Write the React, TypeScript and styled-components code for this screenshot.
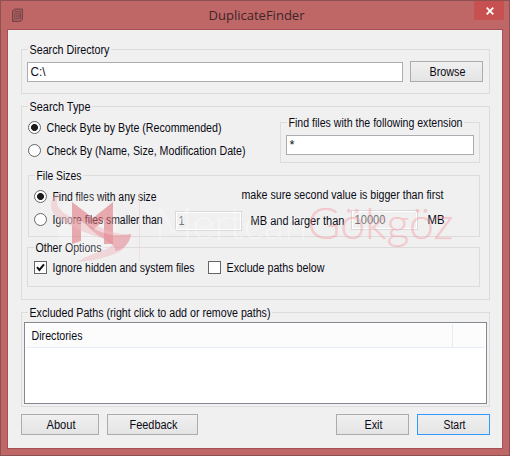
import React, { useLayoutEffect, useRef } from 'react';
import styled, { createGlobalStyle } from 'styled-components';

const GlobalStyle = createGlobalStyle`
  *, *::before, *::after { box-sizing: border-box; }
  body { margin: 0; background: #bf6767; }
`;

/* ---------- text ---------- */

const TextBox = styled.span<{ $w: number }>`
  display: block;
  flex: none;
  width: ${(p) => p.$w}px;
  white-space: nowrap;
`;

const TextInner = styled.span`
  display: inline-block;
  vertical-align: top;
  transform-origin: 0 50%;
`;

/* Condenses a label horizontally so that it fills the given width. */
function Text({ w, children, className }: { w: number; children: string; className?: string }) {
  const ref = useRef<HTMLSpanElement>(null);
  useLayoutEffect(() => {
    const el = ref.current;
    if (el && el.offsetWidth) {
      el.style.transform = 'none';
      el.style.transform = `translate(0.5px, 1px) scaleX(${w / el.getBoundingClientRect().width})`;
    }
  }, [w, children]);
  return (
    <TextBox $w={w} className={className}>
      <TextInner ref={ref}>{children}</TextInner>
    </TextBox>
  );
}

const Note = styled(Text)<{ $ml?: number; $mt?: number }>`
  margin-left: ${(p) => p.$ml ?? 0}px;
  margin-top: ${(p) => p.$mt ?? 0}px;
`;

/* ---------- window ---------- */

const Window = styled.div`
  position: relative;
  width: 510px;
  height: 456px;
  padding: 0 6px 6px;
  background: #bf6767;
  border: 1px solid #8f5051;
  font: 12px/13px 'Liberation Sans', Arial, sans-serif;
  color: #0a0a14;
`;

const TitleBar = styled.header`
  display: flex;
  align-items: flex-start;
  height: 28px;
`;

const AppIcon = styled.svg`
  margin: 7px 0 0 4px;
  width: 14px;
  height: 15px;
`;

const Title = styled(Text)`
  margin: 4px 0 0 183px;
  font: 13.5px/18px 'Open Sans', 'Noto Sans', sans-serif;
  color: #3d2528;
`;

const CloseButton = styled.button`
  display: flex;
  align-items: center;
  justify-content: center;
  width: 30px;
  height: 19px;
  margin: 0 -1px 0 auto;
  padding: 0 0 0 2px;
  border: 0;
  background: #c75050;
`;

const Client = styled.main`
  display: flex;
  flex-direction: column;
  height: 420px;
  padding: 13px 13px 0;
  background: #f0f0f0;
  border: 1px solid #a35155;
`;

/* ---------- controls ---------- */

const Group = styled.fieldset<{ $h: number; $w?: number; $m?: string }>`
  flex: none;
  min-width: 0;
  width: ${(p) => p.$w ?? 469}px;
  height: ${(p) => p.$h}px;
  margin: ${(p) => p.$m ?? '0'};
  padding: 0;
  border: 1px solid #dcdcdc;
`;

const Legend = styled.legend`
  display: block;
  height: 13px;
  margin-left: 6px;
  padding: 0 2px 0 1px;
`;

const Row = styled.div<{ $p?: string; $h?: number }>`
  display: flex;
  align-items: flex-start;
  padding: ${(p) => p.$p ?? '0'};
  height: ${(p) => (p.$h ? `${p.$h}px` : 'auto')};
`;

const RadioList = styled.div`
  display: flex;
  flex-direction: column;
  gap: 10px;
  padding: 8px 0 0 6px;
`;

const Field = styled.div<{ $w: number; $mt?: number; $ml?: number; $disabled?: boolean }>`
  flex: none;
  width: ${(p) => p.$w}px;
  height: 20px;
  margin: ${(p) => p.$mt ?? 0}px 0 0 ${(p) => p.$ml ?? 0}px;
  padding: 2px 0 0 2px;
  background: ${(p) => (p.$disabled ? '#f0f0f0' : '#fff')};
  border: 1px solid ${(p) => (p.$disabled ? '#d9d9d9' : '#abadb3')};
  box-shadow: ${(p) => (p.$disabled ? 'inset 0 0 0 1px #fff' : 'none')};
  color: ${(p) => (p.$disabled ? '#747474' : 'inherit')};
`;

const Button = styled.button<{ $w: number; $ml?: number; $primary?: boolean }>`
  display: flex;
  justify-content: center;
  flex: none;
  width: ${(p) => p.$w}px;
  height: 21px;
  margin: 0 0 0 ${(p) => p.$ml ?? 0}px;
  padding: 3px 0 0;
  font: inherit;
  color: inherit;
  text-align: left;
  background: linear-gradient(#f0f0f0, #e4e4e4);
  border: 1px solid ${(p) => (p.$primary ? '#3399ff' : '#acacac')};
`;

const Option = styled.label<{ $mt?: number; $ml?: number }>`
  display: flex;
  flex: none;
  gap: 5px;
  margin: ${(p) => p.$mt ?? 0}px 0 0 ${(p) => p.$ml ?? 0}px;
`;

const RadioMark = styled.span<{ $on?: boolean }>`
  flex: none;
  width: 13px;
  height: 13px;
  border: 1px solid #666;
  border-radius: 50%;
  background: ${(p) =>
    p.$on ? 'radial-gradient(circle, #1c1c1c 3.1px, #fff 3.8px)' : '#fff'};
`;

const CheckMark = styled.span`
  display: flex;
  flex: none;
  width: 13px;
  height: 13px;
  border: 1px solid #666;
  background: #fff;
`;

function Radio({ on, w, mt, label }: { on?: boolean; w: number; mt?: number; label: string }) {
  return (
    <Option $mt={mt}>
      <RadioMark $on={on} />
      <Text w={w}>{label}</Text>
    </Option>
  );
}

function Check({ on, w, ml, label }: { on?: boolean; w: number; ml?: number; label: string }) {
  return (
    <Option $ml={ml}>
      <CheckMark>
        {on && (
          <svg width="11" height="11" viewBox="0 0 11 11">
            <path d="M2 5.2 4.4 8 9 2.4" fill="none" stroke="#111" strokeWidth="2" />
          </svg>
        )}
      </CheckMark>
      <Text w={w}>{label}</Text>
    </Option>
  );
}

/* ---------- list ---------- */

const List = styled.div`
  width: 463px;
  height: 82px;
  margin: 3px 0 0 2px;
  padding: 1px;
  background: #fff;
  border: 1px solid #828790;
`;

const ListHeader = styled.div`
  display: flex;
  height: 24px;
  background: #fcfcfc;
  border-bottom: 1px solid #e8eef7;
`;

const Column = styled.div`
  width: 427px;
  padding: 5px 0 0 5px;
  border-right: 1px solid #e3ecf7;
`;

const Footer = styled.footer`
  display: flex;
  margin-top: 7px;
`;

/* ---------- watermark ---------- */

const Watermark = styled.div`
  position: absolute;
  left: 49px;
  top: 187px;
  display: flex;
  width: 410px;
  height: 78px;
  pointer-events: none;
`;

const Brand = styled.div`
  display: flex;
  margin: 8px 0 0 12px;
  font: 300 43px/52px Lato, 'Open Sans', sans-serif;
`;

const BrandFirst = styled(Text)`
  color: rgba(255, 255, 255, 0.36);
`;

const BrandLast = styled(Text)`
  color: rgba(246, 145, 155, 0.38);
  -webkit-text-stroke: 0.4px rgba(246, 145, 155, 0.3);
`;

export default function App() {
  return (
    <Window>
      <GlobalStyle />
      <TitleBar>
        <AppIcon viewBox="0 0 14 15">
          <path d="M3.5 1h8v10.5l-2 2h-8V3z" fill="#a75b5c" stroke="#754347" />
          <path d="M3.5 3.5h6v8M1 13.500l3-3M4.500 5.500h3l1.500 1.500v2l-1.500 1.500h-3L3.500 9V7zM5.500 7v2M7.500 7v2" fill="none" stroke="#7b484b" strokeWidth=".9" />
        </AppIcon>
        <Title w={96}>DuplicateFinder</Title>
        <CloseButton aria-label="Close">
          <svg width="8" height="8" viewBox="0 0 8 8">
            <path d="M.7.7l6.600 6.600M7.300.7L.7 7.300" stroke="#fff" strokeWidth="1.800" />
          </svg>
        </CloseButton>
      </TitleBar>

      <Client>
        <Group $h={51}>
          <Legend><Text w={80}>Search Directory</Text></Legend>
          <Row $p="5px 0 0 5px">
            <Field $w={376} $mt={1}><Text w={15}>C:\</Text></Field>
            <Button $w={73} $ml={7}><Text w={36}>Browse</Text></Button>
          </Row>
        </Group>

        <Group $h={200} $m="6px 0 0">
          <Legend><Text w={61}>Search Type</Text></Legend>
          <Row>
            <RadioList>
              <Radio on w={175} label="Check Byte by Byte (Recommended)" />
              <Radio w={199} label="Check By (Name, Size, Modification Date)" />
            </RadioList>
            <Group $w={200} $h={47} $m="3px 9px 0 auto">
              <Legend><Text w={174}>Find files with the following extension</Text></Legend>
              <Row $p="6px 0 0 5px">
                <Field $w={188}><Text w={5}>*</Text></Field>
              </Row>
            </Group>
          </Row>

          <Group $w={452} $h={68} $m="6px 0 0 6px">
            <Legend><Text w={45}>File Sizes</Text></Legend>
            <Row $p="6px 0 0 5px" $h={28}>
              <Radio on mt={2} w={104} label="Find files with any size" />
              <Note $ml={85} w={202}>make sure second value is bigger than first</Note>
            </Row>
            <Row $p="0 0 0 5px">
              <Radio mt={3} w={110} label="Ignore files smaller than" />
              <Field $w={67} $ml={13} $mt={1} $disabled><Text w={6}>1</Text></Field>
              <Note $ml={8} $mt={4} w={94}>MB and larger than</Note>
              <Field $w={67} $ml={7} $disabled><Text w={31}>10000</Text></Field>
              <Note $ml={9} $mt={3} w={17}>MB</Note>
            </Row>
          </Group>

          <Group $w={453} $h={46} $m="4px 0 0 5px">
            <Legend><Text w={66}>Other Options</Text></Legend>
            <Row $p="7px 0 0 6px">
              <Check on w={142} label="Ignore hidden and system files" />
              <Check ml={14} w={98} label="Exclude paths below" />
            </Row>
          </Group>
        </Group>

        <Group $h={101} $m="6px 0 0">
          <Legend><Text w={241}>Excluded Paths (right click to add or remove paths)</Text></Legend>
          <List>
            <ListHeader>
              <Column><Text w={51}>Directories</Text></Column>
            </ListHeader>
          </List>
        </Group>

        <Footer>
          <Button $w={78}><Text w={29}>About</Text></Button>
          <Button $w={91} $ml={8}><Text w={48}>Feedback</Text></Button>
          <Button $w={73} $ml={138}><Text w={18}>Exit</Text></Button>
          <Button $w={73} $ml={8} $primary><Text w={22}>Start</Text></Button>
        </Footer>
      </Client>

      <Watermark>
        <svg width="92" height="78" viewBox="0 0 92 78">
          <circle cx="38" cy="38" r="31" fill="#fff" opacity=".2" />
          <path d="M22 14 43 30 63 14V56H54V32L43 42 31 33V53L22 56Z" fill="#d6505c" opacity=".45" />
          <path
            d="M12 3C-2 8-2 22 8 30c12 9 32 17 47 21 11 3 9 7 1 10-9 4-20 7-29 13 15-1 41-6 48-15 4-6 6-10 6-13-11 1-21-2-31-7C38 33 18 32 9 20 5 14 7 7 12 3z"
            fill="#f0bcc1"
            opacity=".5"
          />
          <path d="M36 35c10 8 24 15 45 11 0 6-6 16-16 17 3-9-22-14-29-28z" fill="#e0707b" opacity=".34" />
          <path d="M89.5 4v69" stroke="#f1cfd2" opacity=".55" />
        </svg>
        <Brand>
          <BrandFirst w={153}>Mertcan</BrandFirst>
          <BrandLast w={146}>Gökgöz</BrandLast>
        </Brand>
      </Watermark>
    </Window>
  );
}
